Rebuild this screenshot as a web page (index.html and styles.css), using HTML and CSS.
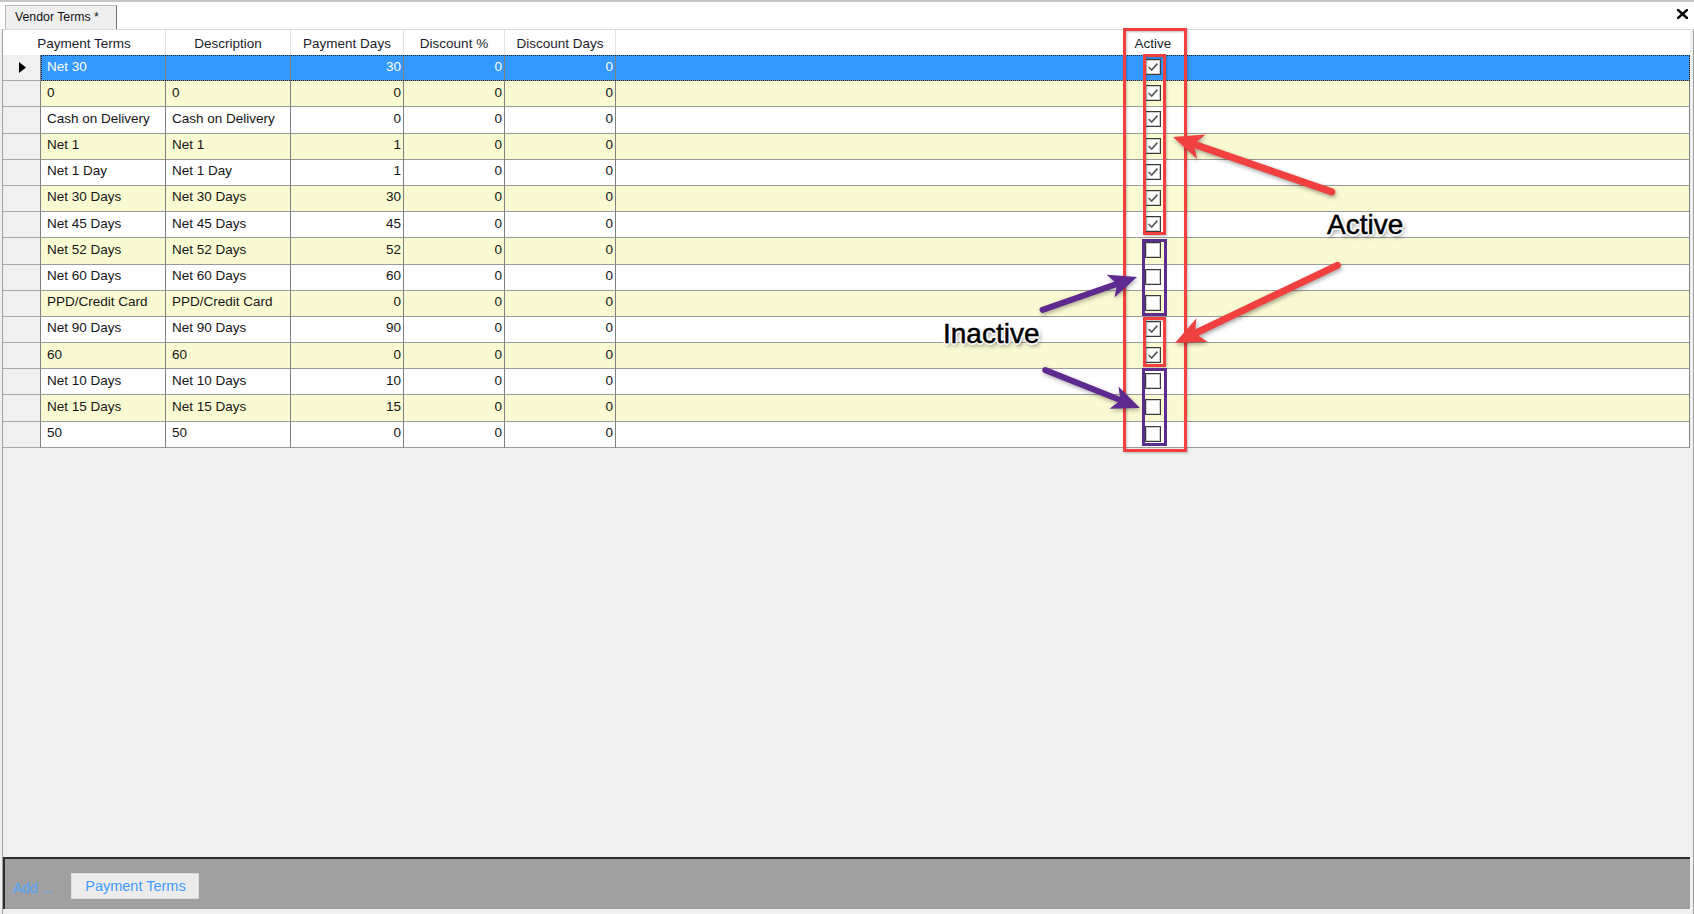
FILE: index.html
```html
<!DOCTYPE html>
<html>
<head>
<meta charset="utf-8">
<title>Vendor Terms</title>
<link rel="stylesheet" href="styles.css">
</head>
<body>
<div class="app">
  <div class="tabstrip">
    <div class="tab">Vendor Terms *</div>
    <div class="close"><svg width="11" height="10" viewBox="0 0 11 10"><path d="M1 1 L10 9 M10 1 L1 9" stroke="#000" stroke-width="2.4" stroke-linecap="square"/></svg></div>
  </div>
  <div class="main">
    <div class="grid">
      <div class="hdr">
        <div class="h">Payment Terms</div>
        <div class="h">Description</div>
        <div class="h">Payment Days</div>
        <div class="h">Discount %</div>
        <div class="h">Discount Days</div>
        <div class="h h-last">Active</div>
      </div>

      <div class="row sel">
        <div class="rh"><svg width="7" height="11" viewBox="0 0 7 11"><path d="M0 0 L7 5.5 L0 11 Z" fill="#000"/></svg></div>
        <div class="cells"><div class="c">Net 30</div><div class="c"></div><div class="c n">30</div><div class="c n">0</div><div class="c n">0</div><div class="c act"><span class="cb"><svg viewBox="0 0 14 14"><path d="M2.6 7 L5.7 10 L11.4 3.6"/></svg></span></div></div>
      </div>
      <div class="row y">
        <div class="rh"></div>
        <div class="cells"><div class="c">0</div><div class="c">0</div><div class="c n">0</div><div class="c n">0</div><div class="c n">0</div><div class="c act"><span class="cb"><svg viewBox="0 0 14 14"><path d="M2.6 7 L5.7 10 L11.4 3.6"/></svg></span></div></div>
      </div>
      <div class="row">
        <div class="rh"></div>
        <div class="cells"><div class="c">Cash on Delivery</div><div class="c">Cash on Delivery</div><div class="c n">0</div><div class="c n">0</div><div class="c n">0</div><div class="c act"><span class="cb"><svg viewBox="0 0 14 14"><path d="M2.6 7 L5.7 10 L11.4 3.6"/></svg></span></div></div>
      </div>
      <div class="row y">
        <div class="rh"></div>
        <div class="cells"><div class="c">Net 1</div><div class="c">Net 1</div><div class="c n">1</div><div class="c n">0</div><div class="c n">0</div><div class="c act"><span class="cb"><svg viewBox="0 0 14 14"><path d="M2.6 7 L5.7 10 L11.4 3.6"/></svg></span></div></div>
      </div>
      <div class="row">
        <div class="rh"></div>
        <div class="cells"><div class="c">Net 1 Day</div><div class="c">Net 1 Day</div><div class="c n">1</div><div class="c n">0</div><div class="c n">0</div><div class="c act"><span class="cb"><svg viewBox="0 0 14 14"><path d="M2.6 7 L5.7 10 L11.4 3.6"/></svg></span></div></div>
      </div>
      <div class="row y">
        <div class="rh"></div>
        <div class="cells"><div class="c">Net 30 Days</div><div class="c">Net 30 Days</div><div class="c n">30</div><div class="c n">0</div><div class="c n">0</div><div class="c act"><span class="cb"><svg viewBox="0 0 14 14"><path d="M2.6 7 L5.7 10 L11.4 3.6"/></svg></span></div></div>
      </div>
      <div class="row">
        <div class="rh"></div>
        <div class="cells"><div class="c">Net 45 Days</div><div class="c">Net 45 Days</div><div class="c n">45</div><div class="c n">0</div><div class="c n">0</div><div class="c act"><span class="cb"><svg viewBox="0 0 14 14"><path d="M2.6 7 L5.7 10 L11.4 3.6"/></svg></span></div></div>
      </div>
      <div class="row y">
        <div class="rh"></div>
        <div class="cells"><div class="c">Net 52 Days</div><div class="c">Net 52 Days</div><div class="c n">52</div><div class="c n">0</div><div class="c n">0</div><div class="c act"><span class="cb"></span></div></div>
      </div>
      <div class="row">
        <div class="rh"></div>
        <div class="cells"><div class="c">Net 60 Days</div><div class="c">Net 60 Days</div><div class="c n">60</div><div class="c n">0</div><div class="c n">0</div><div class="c act"><span class="cb"></span></div></div>
      </div>
      <div class="row y">
        <div class="rh"></div>
        <div class="cells"><div class="c">PPD/Credit Card</div><div class="c">PPD/Credit Card</div><div class="c n">0</div><div class="c n">0</div><div class="c n">0</div><div class="c act"><span class="cb"></span></div></div>
      </div>
      <div class="row">
        <div class="rh"></div>
        <div class="cells"><div class="c">Net 90 Days</div><div class="c">Net 90 Days</div><div class="c n">90</div><div class="c n">0</div><div class="c n">0</div><div class="c act"><span class="cb"><svg viewBox="0 0 14 14"><path d="M2.6 7 L5.7 10 L11.4 3.6"/></svg></span></div></div>
      </div>
      <div class="row y">
        <div class="rh"></div>
        <div class="cells"><div class="c">60</div><div class="c">60</div><div class="c n">0</div><div class="c n">0</div><div class="c n">0</div><div class="c act"><span class="cb"><svg viewBox="0 0 14 14"><path d="M2.6 7 L5.7 10 L11.4 3.6"/></svg></span></div></div>
      </div>
      <div class="row">
        <div class="rh"></div>
        <div class="cells"><div class="c">Net 10 Days</div><div class="c">Net 10 Days</div><div class="c n">10</div><div class="c n">0</div><div class="c n">0</div><div class="c act"><span class="cb"></span></div></div>
      </div>
      <div class="row y">
        <div class="rh"></div>
        <div class="cells"><div class="c">Net 15 Days</div><div class="c">Net 15 Days</div><div class="c n">15</div><div class="c n">0</div><div class="c n">0</div><div class="c act"><span class="cb"></span></div></div>
      </div>
      <div class="row">
        <div class="rh"></div>
        <div class="cells"><div class="c">50</div><div class="c">50</div><div class="c n">0</div><div class="c n">0</div><div class="c n">0</div><div class="c act"><span class="cb"></span></div></div>
      </div>
    </div>
    <div class="spacer"></div>
    <div class="footer">
      <span class="add">Add ...</span>
      <button class="btn">Payment Terms</button>
    </div>
  </div>
</div>

<svg class="ann" width="1694" height="914" viewBox="0 0 1694 914">
  <g class="red-box">
    <rect x="1124.5" y="29.5" width="61" height="421"/>
    <rect x="1144.5" y="55.5" width="20" height="178"/>
    <rect x="1144.5" y="318.5" width="20" height="47"/>
  </g>
  <g class="purple-box">
    <rect x="1143.5" y="240.5" width="22" height="74"/>
    <rect x="1143.5" y="369.5" width="22" height="75"/>
  </g>
  <g class="red-arrow">
    <g transform="translate(1173,137) rotate(199.08)">
      <line x1="-168" y1="0" x2="-18" y2="0"/>
      <polygon points="0,0 -30,-13 -22,0 -30,13"/>
    </g>
    <g transform="translate(1175,343) rotate(154.43)">
      <line x1="-180" y1="0" x2="-18" y2="0"/>
      <polygon points="0,0 -30,-13 -22,0 -30,13"/>
    </g>
  </g>
  <g class="purple-arrow">
    <g transform="translate(1137,277) rotate(-19.16)">
      <line x1="-100" y1="0" x2="-18" y2="0"/>
      <polygon points="0,0 -28,-12 -21,0 -28,12"/>
    </g>
    <g transform="translate(1140,408) rotate(21.8)">
      <line x1="-102" y1="0" x2="-18" y2="0"/>
      <polygon points="0,0 -28,-12 -21,0 -28,12"/>
    </g>
  </g>
</svg>
<div class="lbl lbl-active">Active</div>
<div class="lbl lbl-inactive">Inactive</div>
</body>
</html>
```

FILE: styles.css
```css
* { box-sizing: border-box; }
html, body { margin: 0; padding: 0; }
body {
  position: relative;
  width: 1694px;
  height: 914px;
  overflow: hidden;
  background: #f0f0f0;
  font-family: "Liberation Sans", Arial, sans-serif;
}

.app {
  height: 914px;
  display: flex;
  flex-direction: column;
  border-top: 2px solid #c6c6c6;
}

/* tab strip */
.tabstrip {
  height: 27px;
  flex: none;
  background: #fff;
  display: flex;
  align-items: flex-end;
  padding: 0 6px 0 5px;
}
.tab {
  width: 112px;
  height: 24px;
  padding-left: 9px;
  background: #efefef;
  border: 1px solid #b8b8b8;
  border-right-color: #6f6f6f;
  border-bottom: none;
  font-size: 12.3px;
  line-height: 22px;
  color: #111;
  white-space: nowrap;
}
.close {
  margin-left: auto;
  align-self: center;
  display: flex;
  margin-top: -3px;
}

/* main area */
.main {
  flex: 1;
  display: flex;
  flex-direction: column;
  margin-left: 2px;
  border-left: 1px solid #a0a0a0;
  border-right: 1px solid #a0a0a0;
  padding: 0 3px 5px 0;
}

.grid { flex: none; }

.hdr {
  display: grid;
  grid-template-columns: 163px 125px 113px 101px 111px 1fr;
  height: 26px;
  background: #fff;
  border-top: 1px solid #dadada;
}
.h {
  border-right: 1px solid #e2e2e2;
  text-align: center;
  font-size: 13.5px;
  line-height: 22px;
  padding-top: 3px;
  color: #1c1c2a;
  white-space: nowrap;
}
.h-last { border-right: none; }

.row {
  display: flex;
  height: 26.2px;
}
.rh {
  width: 38px;
  flex: none;
  background: #f0f0f0;
  border-right: 1px solid #808080;
  border-bottom: 1px solid #a8a8a8;
  display: flex;
  align-items: center;
  justify-content: center;
  padding-left: 1px;
}
.cells {
  flex: 1;
  display: grid;
  grid-template-columns: 125px 125px 113px 101px 111px 1fr;
}
.c {
  background: #fff;
  border-right: 1px solid #808080;
  border-bottom: 1px solid #9a9a9a;
  font-size: 13.5px;
  line-height: 20px;
  padding: 1.5px 2px 0 6px;
  color: #151515;
  white-space: nowrap;
  overflow: hidden;
}
.n {
  text-align: right;
  padding-left: 0;
  padding-right: 2px;
}
.act {
  display: flex;
  justify-content: center;
  align-items: flex-start;
  padding: 4px 0 0 0;
}
.cb {
  width: 16px;
  height: 16px;
  border: 1px solid #3a3a3a;
  box-shadow: inset 0 0 0 1px rgba(90,90,90,0.3);
  background: #fff;
  display: block;
}
.cb svg {
  display: block;
  width: 14px;
  height: 14px;
}
.cb path {
  fill: none;
  stroke: #5a5a5a;
  stroke-width: 1.7;
}

.row.y .c { background: #fafad2; }
.row.sel .c { background: #3399ff; color: #fff; }
.row.sel .cells {
  outline: 1px dotted #0d1e36;
  outline-offset: -1px;
}

.spacer { flex: 1; }

/* footer bar */
.footer {
  height: 52px;
  flex: none;
  background: #a0a0a0;
  border-top: 2px solid #2d2d2d;
  border-left: 2px solid #2d2d2d;
  display: flex;
  align-items: center;
  gap: 18px;
  padding: 4px 0 0 8px;
}
.add {
  font-size: 14px;
  color: #4ea5ff;
  margin-top: 4px;
}
.btn {
  width: 128px;
  height: 26px;
  padding: 0;
  background: #ececec;
  border: 1px solid #dcdcdc;
  color: #3d9bff;
  font-family: "Liberation Sans", Arial, sans-serif;
  font-size: 14.5px;
  display: flex;
  align-items: center;
  justify-content: center;
}

/* annotations */
.ann {
  position: absolute;
  left: 0;
  top: 0;
  pointer-events: none;
}
.red-box rect {
  fill: none;
  stroke: #f0403f;
  stroke-width: 3;
}
.red-box { filter: drop-shadow(1px 1px 1px rgba(0,0,0,0.25)); }
.purple-box rect {
  fill: none;
  stroke: #5c2d91;
  stroke-width: 3;
}
.red-arrow line {
  stroke: #f0403f;
  stroke-width: 7;
  stroke-linecap: round;
}
.red-arrow polygon { fill: #f0403f; }
.red-arrow { filter: drop-shadow(1px 2px 2px rgba(0,0,0,0.35)); }
.purple-arrow line {
  stroke: #5e2a90;
  stroke-width: 6;
  stroke-linecap: round;
}
.purple-arrow polygon { fill: #5e2a90; }
.purple-arrow { filter: drop-shadow(1px 2px 2px rgba(0,0,0,0.3)); }

.lbl {
  position: absolute;
  font-family: "Liberation Sans", Arial, sans-serif;
  font-size: 28px;
  line-height: 28px;
  color: #000;
  white-space: nowrap;
  -webkit-text-stroke: 0.5px #000;
  text-shadow:
    -1px -1px 0 #fff, 1px -1px 0 #fff, -1px 1px 0 #fff, 1px 1px 0 #fff,
    0 -2px 0 #fff, 0 2px 0 #fff, -2px 0 0 #fff, 2px 0 0 #fff,
    2px 3px 4px rgba(0,0,0,0.55);
}
.lbl-active { left: 1327px; top: 211px; }
.lbl-inactive { left: 943px; top: 320px; }
```
